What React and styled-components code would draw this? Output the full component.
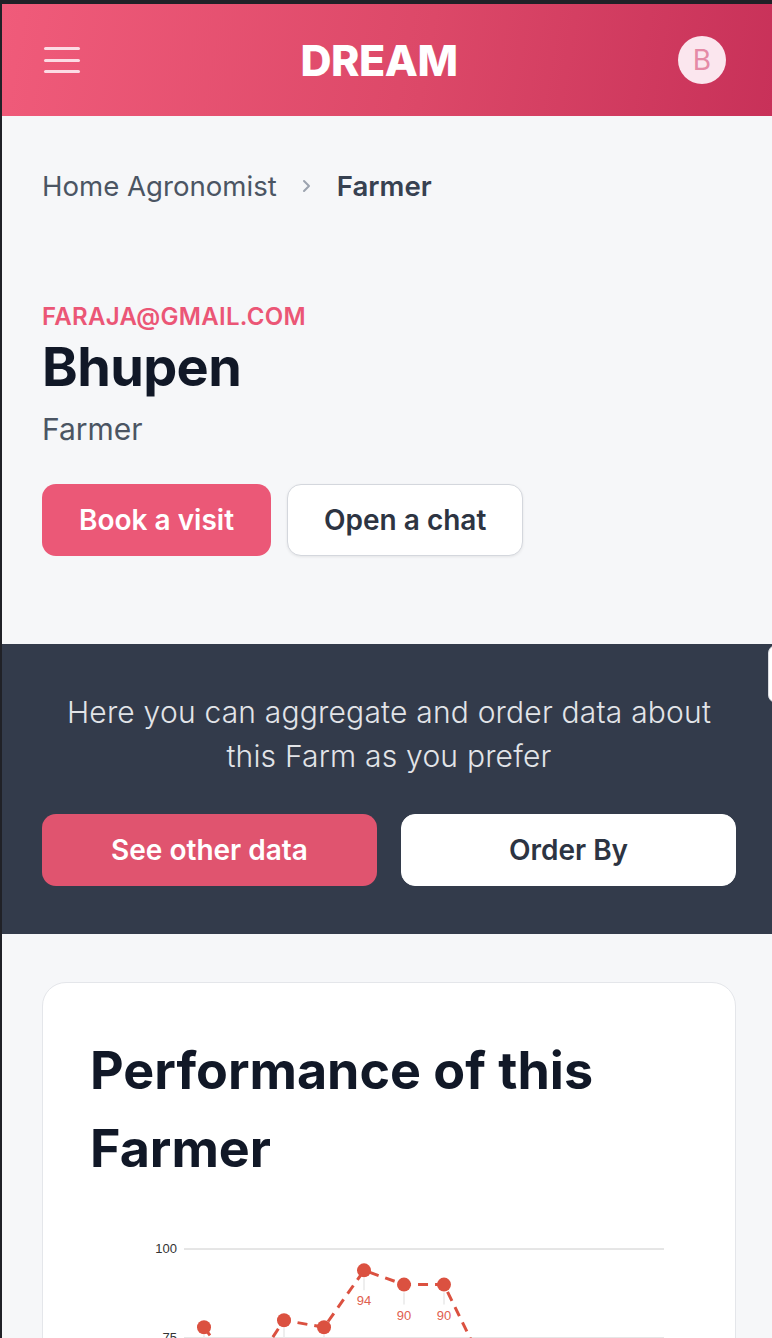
import React from "react";
import styled, {createGlobalStyle} from "styled-components";

const GlobalStyle = createGlobalStyle`
  body {
    margin: 0;
    background: #202127;
    font-family: Inter, "Noto Sans", sans-serif;
  }
  * { box-sizing: border-box; }
`;

const Page = styled.div`
  position: relative;
  min-height: 100vh;
  overflow: hidden;
  border-top: 4px solid #202127;
  border-left: 2px solid #202127;
  background: #f6f7f9;
`;

const SideTab = styled.div`
  position: absolute;
  right: -6px;
  top: 641px;
  width: 10px;
  height: 58px;
  background: #fff;
  border-radius: 8px 0 0 8px;
  border: 1px solid #d9dbe0;
`;

const Header = styled.header`
  height: 112px;
  display: flex;
  align-items: center;
  justify-content: space-between;
  padding: 0 46px 0 42px;
  background: linear-gradient(100deg, #f05b7a 0%, #dc4868 55%, #c83159 100%);
`;

const MenuButton = styled.button`
  width: 36px;
  height: 26px;
  padding: 0;
  border: none;
  background: none;
  display: flex;
  flex-direction: column;
  justify-content: space-between;
`;

const MenuLine = styled.span`
  display: block;
  height: 3px;
  border-radius: 2px;
  background: #fcdbe4;
`;

const Logo = styled.div`
  color: #fff;
  font-size: 43px;
  font-weight: 800;
  letter-spacing: -0.5px;
`;

const Avatar = styled.div`
  width: 48px;
  height: 48px;
  border-radius: 50%;
  background: #fbe6ee;
  color: #e58aa6;
  font-size: 28px;
  display: flex;
  align-items: center;
  justify-content: center;
`;

const Hero = styled.section`
  padding: 50px 36px 88px 40px;
`;

const Breadcrumb = styled.nav`
  display: flex;
  align-items: center;
  gap: 24px;
  font-size: 27.6px;
  line-height: 40px;
  color: #4b5563;
`;

const Crumb = styled.span`
  font-weight: ${p => (p.$current ? 600 : 400)};
  color: ${p => (p.$current ? "#374151" : "#4b5563")};
`;

const Email = styled.div`
  margin-top: 95px;
  font-size: 24px;
  line-height: 32px;
  font-weight: 600;
  letter-spacing: 0.3px;
  color: #eb5676;
`;

const Name = styled.h1`
  margin: 1px 0 0;
  font-size: 54px;
  line-height: 66px;
  font-weight: 700;
  letter-spacing: -0.6px;
  color: #111827;
`;

const Role = styled.div`
  margin-top: 9px;
  font-size: 30px;
  line-height: 40px;
  color: #4b5563;
`;

const ButtonRow = styled.div`
  display: flex;
  gap: ${p => p.$gap || 16}px;
  margin-top: ${p => p.$top || 0}px;
`;

const Button = styled.button`
  height: 72px;
  padding: 0 36px;
  flex: ${p => (p.$stretch ? 1 : "none")};
  border-radius: 14px;
  font-family: Inter, sans-serif;
  font-size: 28px;
  font-weight: 600;
  border: 1px solid ${p => (p.$primary ? "transparent" : p.$flat ? "#fff" : "#d4d7dd")};
  background: ${p => (p.$primary ? p.$primary : "#fff")};
  color: ${p => (p.$primary ? "#fff" : "#2d3442")};
  box-shadow: ${p => (p.$primary || p.$flat ? "none" : "0 1px 3px rgba(0,0,0,0.08)")};
`;

const DarkBand = styled.section`
  background: #333b4b;
  padding: 46px 36px 48px 40px;
`;

const BandText = styled.p`
  margin: 0;
  text-align: center;
  font-size: 30px;
  line-height: 44px;
  font-weight: 300;
  letter-spacing: 0.2px;
  color: #e2e4e8;
`;

const Content = styled.section`
  padding: 48px 36px 40px 40px;
`;

const Card = styled.div`
  background: #fff;
  border: 1px solid #e4e6ea;
  border-radius: 24px;
  padding: 49px 47px 40px;
`;

const CardTitle = styled.h2`
  margin: 0;
  font-size: 52px;
  line-height: 78px;
  font-weight: 700;
  color: #111827;
`;

const ChartWrap = styled.div`
  margin-top: 32px;
  margin-left: -47px;
`;

const performance = [78, 63, 80, 78, 94, 90, 90, 67, 60, 58, 62, 55];

const Chart = () => {
  const x0 = 161;
  const step = 40;
  const yTop = 29;
  const unit = 3.56;
  const yOf = v => yTop + (100 - v) * unit;
  const pts = performance.map((v, i) => [x0 + i * step, yOf(v)]);
  const path = pts.map((p, i) => `${i ? "L" : "M"}${p[0]},${p[1]}`).join(" ");

  return (
    <svg width="694" height="420" viewBox="0 0 694 420">
      {[100, 75, 50, 25].map(v => (
        <g key={v}>
          <line x1="141" x2="621" y1={yOf(v)} y2={yOf(v)} stroke="#cccccc" strokeWidth="1" />
          <text x="134" y={yOf(v) + 4} textAnchor="end" fontSize="13" fill="#333" fontFamily="Liberation Sans, Arial, sans-serif">{v}</text>
        </g>
      ))}
      {pts.map((p, i) => (
        <line key={"t" + i} x1={p[0]} x2={p[0]} y1={p[1] + 8} y2={p[1] + 20} stroke="#e8e8e8" strokeWidth="1.5" />
      ))}
      <path d={path} fill="none" stroke="#db5140" strokeWidth="3" strokeDasharray="10 7" />
      {pts.map((p, i) => (
        <g key={"p" + i}>
          <circle cx={p[0]} cy={p[1]} r="7" fill="#db5140" />
          <text x={p[0]} y={p[1] + 35} textAnchor="middle" fontSize="13" fill="#e0604f" fontFamily="Liberation Sans, Arial, sans-serif">{performance[i]}</text>
        </g>
      ))}
    </svg>
  );
};

const ChevronIcon = () => (
  <svg width="12" height="16" viewBox="0 0 12 16">
    <path d="M3 3 L8 8 L3 13" fill="none" stroke="#9ca3af" strokeWidth="2" strokeLinecap="round" strokeLinejoin="round" />
  </svg>
);

const App = () => (
  <>
    <GlobalStyle />
    <Page>
      <Header>
        <MenuButton aria-label="menu">
          <MenuLine />
          <MenuLine />
          <MenuLine />
        </MenuButton>
        <Logo>DREAM</Logo>
        <Avatar>B</Avatar>
      </Header>

      <Hero>
        <Breadcrumb>
          <Crumb>Home Agronomist</Crumb>
          <ChevronIcon />
          <Crumb $current>Farmer</Crumb>
        </Breadcrumb>
        <Email>FARAJA@GMAIL.COM</Email>
        <Name>Bhupen</Name>
        <Role>Farmer</Role>
        <ButtonRow $top={35}>
          <Button $primary="#eb5877">Book a visit</Button>
          <Button>Open a chat</Button>
        </ButtonRow>
      </Hero>

      <DarkBand>
        <BandText>
          Here you can aggregate and order data about
          <br />
          this Farm as you prefer
        </BandText>
        <ButtonRow $gap={24} $top={36}>
          <Button $primary="#e0546f" $stretch>See other data</Button>
          <Button $flat $stretch>Order By</Button>
        </ButtonRow>
      </DarkBand>

      <Content>
        <Card>
          <CardTitle>Performance of this Farmer</CardTitle>
          <ChartWrap>
            <Chart />
          </ChartWrap>
        </Card>
      </Content>

      <SideTab />
    </Page>
  </>
);

export default App;
